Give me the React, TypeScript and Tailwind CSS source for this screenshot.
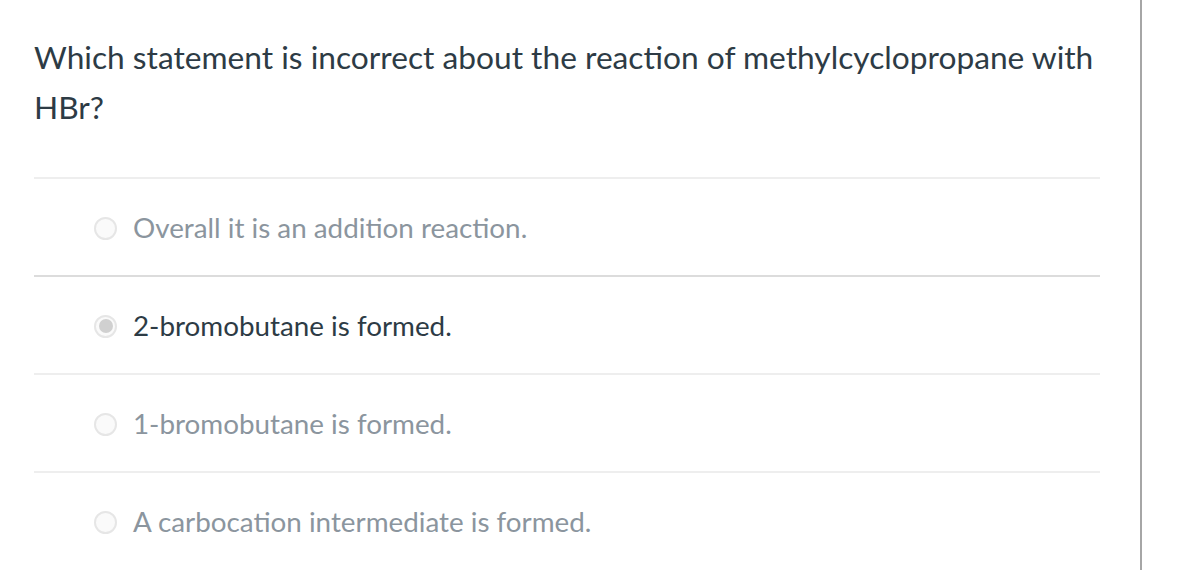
import { useState } from 'react'

const OPTIONS = [
  'Overall it is an addition reaction.',
  '2-bromobutane is formed.',
  '1-bromobutane is formed.',
  'A carbocation intermediate is formed.',
]

export default function App() {
  const [selected] = useState(1)

  return (
    <div className="w-[1178px] h-[570px] overflow-hidden bg-white font-['Lato','Liberation_Sans',sans-serif]">
      <div className="w-[1142px] h-full border-r-2 border-[#a6a6a6] pl-[34px] pr-[40px]">
        {/* Question */}
        <div className="pt-[32px] pb-[45px] text-[31.7px] leading-[50px] text-[#2d3b45]">
          Which statement is incorrect about the reaction of methylcyclopropane with HBr?
        </div>

        {/* Answers */}
        <ul className="flex flex-col">
          {OPTIONS.map((label, i) => {
            const isSelected = i === selected
            return (
              <li
                key={label}
                className={[
                  'flex items-center h-[98px] border-t-2 pt-[2px]',
                  i === 1 ? 'border-[#dcdcdc]' : 'border-[#eeeeee]',
                ].join(' ')}
              >
                <span className="ml-[60px] mr-[16px] flex-none w-[23px] h-[23px] rounded-full border-2 border-[#e6e6e6] bg-[#fafafa] flex items-center justify-center">
                  {isSelected && <span className="w-[14px] h-[14px] rounded-full bg-[#d0d0d0]" />}
                </span>
                <span
                  className={[
                    'text-[27.8px]',
                    isSelected ? 'text-[#2d3b45]' : 'text-[#8b959e]',
                  ].join(' ')}
                >
                  {label}
                </span>
              </li>
            )
          })}
        </ul>
      </div>
    </div>
  )
}
